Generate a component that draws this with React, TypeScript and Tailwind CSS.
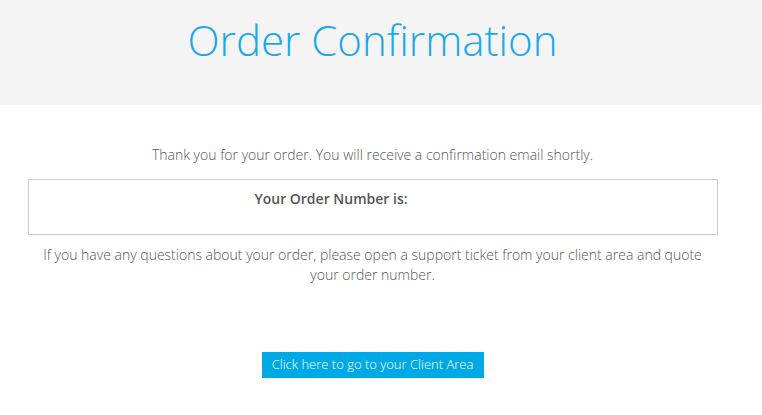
import React from "react";

const App = () => {
  return (
    <div className="min-h-[415px] bg-white font-['Open_Sans',sans-serif] font-light text-[#555]">
      <div className="h-[105px] bg-[#f4f4f4]">
        <div className="w-[745px] flex justify-center pt-[11px]">
          <h1 className="text-[42px] leading-[58px] text-[#1aa7ec]">Order Confirmation</h1>
        </div>
      </div>
      <div className="w-[745px] px-[28px] pt-[40px] flex flex-col items-center">
        <p className="text-[14px] leading-[20px]">
          Thank you for your order. You will receive a confirmation email shortly.
        </p>
        <div className="w-[690px] h-[56px] mt-[14px] border border-[#ccc] pt-[9px] pr-[83px] text-center">
          <p className="text-[14px] leading-[20px] font-semibold text-[#555]">Your Order Number is:</p>
        </div>
        <p className="w-[670px] text-[14px] leading-[20px] text-center mt-[10px]">
          If you have any questions about your order, please open a support ticket from your client area and quote your order number.
        </p>
        <button className="mt-[67px] h-[26px] w-[222px] bg-[#00a9e6] text-white text-[13px] font-light">
          Click here to go to your Client Area
        </button>
      </div>
    </div>
  );
};

export default App;
